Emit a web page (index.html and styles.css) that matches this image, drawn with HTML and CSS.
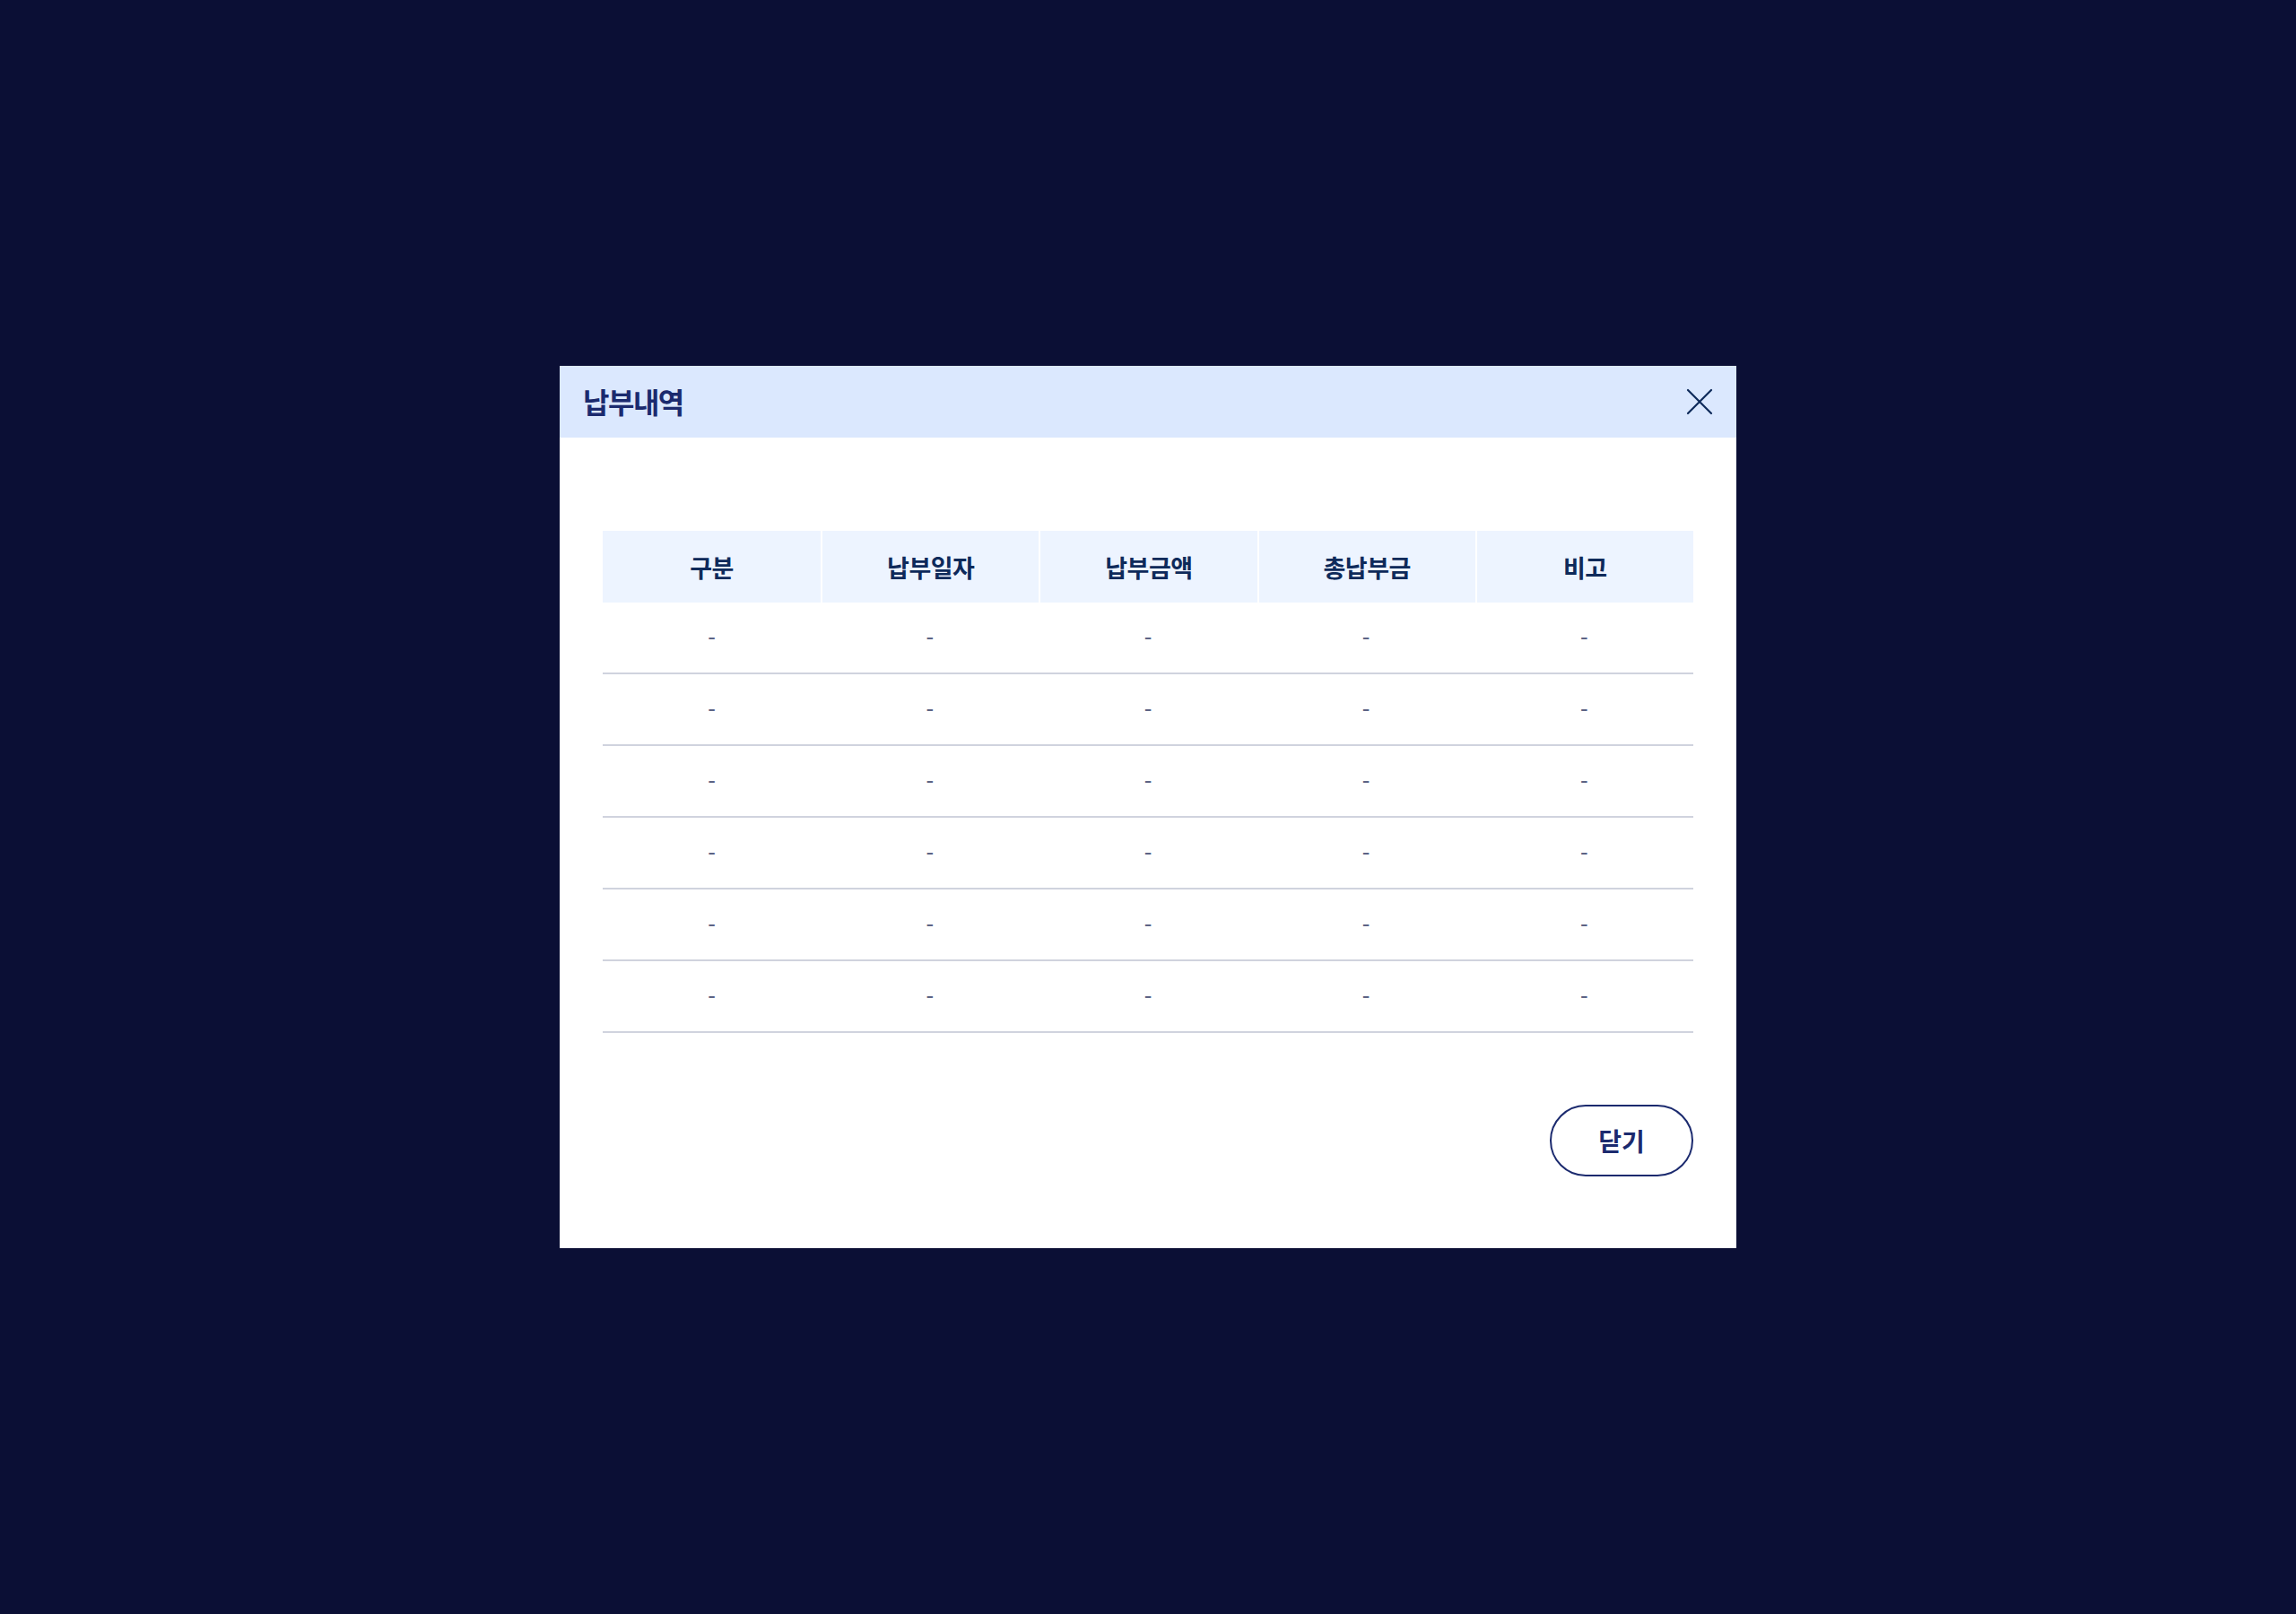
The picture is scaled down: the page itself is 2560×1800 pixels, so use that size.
FILE: index.html
```html
<!DOCTYPE html>
<html lang="ko">
<head>
<meta charset="utf-8">
<title>납부내역</title>
<link rel="stylesheet" href="styles.css">
</head>
<body>
	<div class="dim">
		<div class="modal">
			<div class="modal-head">
				<h2 class="modal-title">납부내역</h2>
				<button class="btn-x" type="button" aria-label="닫기">
					<svg width="30" height="30" viewBox="0 0 30 30"><path d="M2 2 L28 28 M28 2 L2 28" stroke="#0e2a5a" stroke-width="2.2" stroke-linecap="round" fill="none"/></svg>
				</button>
			</div>
			<div class="modal-body">
				<table class="pay-table">
					<thead>
						<tr>
							<th>구분</th>
							<th>납부일자</th>
							<th>납부금액</th>
							<th>총납부금</th>
							<th>비고</th>
						</tr>
					</thead>
					<tbody>
						<tr><td>-</td><td>-</td><td>-</td><td>-</td><td>-</td></tr>
						<tr><td>-</td><td>-</td><td>-</td><td>-</td><td>-</td></tr>
						<tr><td>-</td><td>-</td><td>-</td><td>-</td><td>-</td></tr>
						<tr><td>-</td><td>-</td><td>-</td><td>-</td><td>-</td></tr>
						<tr><td>-</td><td>-</td><td>-</td><td>-</td><td>-</td></tr>
						<tr><td>-</td><td>-</td><td>-</td><td>-</td><td>-</td></tr>
					</tbody>
				</table>
				<div class="modal-foot">
					<button class="btn-close" type="button">닫기</button>
				</div>
			</div>
		</div>
	</div>
</body>
</html>
```

FILE: styles.css
```css
* {
	box-sizing: border-box;
}
html, body {
	margin: 0;
	height: 100%;
}
body {
	background-color: #0b0f35;
	font-family: "Noto Sans CJK KR", "Noto Sans", sans-serif;
}
.dim {
	height: 100%;
	display: flex;
	align-items: center;
	justify-content: center;
}
.modal {
	width: 1312px;
	background-color: #fff;
}
.modal-head {
	height: 80px;
	background-color: #dbe8fe;
	display: flex;
	align-items: center;
	justify-content: space-between;
	padding: 0 26px 0 26px;
}
.modal-title {
	margin: 0 0 2px;
	font-size: 32px;
	line-height: 1;
	font-weight: 700;
	color: #1b2a6e;
	letter-spacing: -1.5px;
}
.btn-x {
	border: 0;
	background: none;
	padding: 0;
	width: 30px;
	height: 30px;
	display: flex;
	cursor: pointer;
}
.modal-body {
	padding: 104px 48px 80px;
}
.pay-table {
	width: 100%;
	border-collapse: separate;
	border-spacing: 0;
	table-layout: fixed;
}
.pay-table th {
	height: 80px;
	background-color: #edf4ff;
	color: #0e2a5a;
	font-size: 27px;
	line-height: 1;
	font-weight: 700;
	letter-spacing: -0.5px;
	border-left: 2px solid #fff;
	padding: 0;
}
.pay-table th:first-child {
	border-left: 0;
}
.pay-table td {
	height: 80px;
	text-align: center;
	color: #5c6384;
	font-size: 24px;
	line-height: 1;
	font-weight: 500;
	border-bottom: 2px solid #d0d3de;
	padding: 0;
}
.modal-foot {
	display: flex;
	justify-content: flex-end;
	margin-top: 80px;
}
.btn-close {
	width: 160px;
	height: 80px;
	border: 2px solid #1b2a6e;
	border-radius: 40px;
	background: #fff;
	color: #1b2a6e;
	font-family: inherit;
	font-size: 28px;
	line-height: 1;
	font-weight: 700;
	cursor: pointer;
}
```
